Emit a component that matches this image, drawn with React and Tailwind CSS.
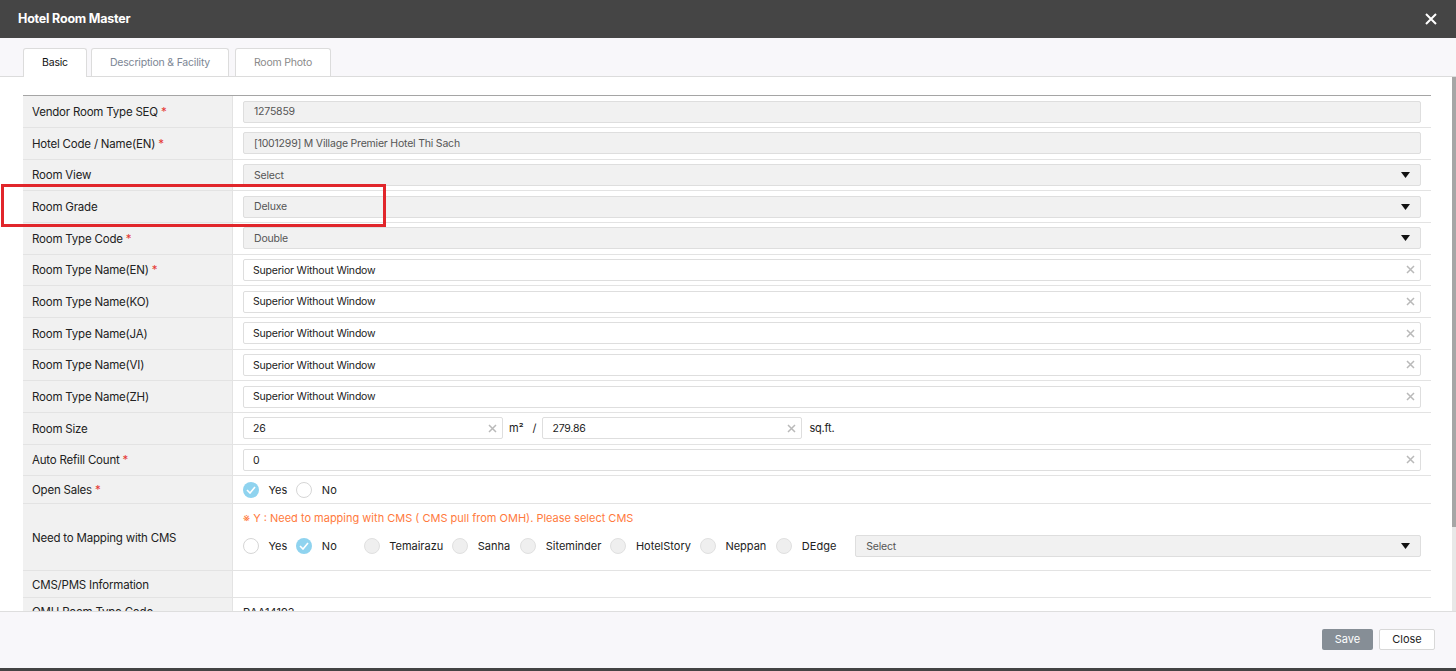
import React from "react";

const Star = () => <span className="text-[#e53935] ml-[3px]">*</span>;

const Arrow = () => (
  <svg width="9" height="6" viewBox="0 0 9 6" className="shrink-0">
    <path d="M0 0 H9 L4.5 6 Z" fill="#111" />
  </svg>
);

const Clear = () => (
  <svg width="9" height="9" viewBox="0 0 9 9" className="shrink-0">
    <path d="M1 1 L8 8 M8 1 L1 8" stroke="#b9b9b9" strokeWidth="1.5" />
  </svg>
);

function Row({ label, req, children, h = "h-[31.67px]", inner = "items-center" }) {
  return (
    <div className={`flex ${h} border-b border-[#e3e3e3]`}>
      <div className="w-[210px] shrink-0 bg-[#f1f1f1] border-r border-[#e3e3e3] flex items-center pl-[9px] pt-[2px] text-[11.5px] tracking-[-0.2px] text-[#222]">
        {label}
        {req && <Star />}
      </div>
      <div className={`flex-1 flex ${inner} px-[10px] min-w-0`}>{children}</div>
    </div>
  );
}

function Disabled({ text, select }) {
  return (
    <div className="flex-1 h-[22px] bg-[#f1f1f1] border border-[#dedede] rounded-[2px] flex items-center pl-[10px] pr-[10px] text-[10.5px] tracking-[-0.2px] text-[#555]">
      <span className="flex-1 pt-[1px]">{text}</span>
      {select && <Arrow />}
    </div>
  );
}

function Input({ text, className = "flex-1" }) {
  return (
    <div className={`${className} h-[22px] bg-white border border-[#dedede] rounded-[2px] flex items-center pl-[9px] pr-[5px] text-[10.5px] tracking-[-0.2px] text-[#222]`}>
      <span className="flex-1 pt-[1px]">{text}</span>
      <Clear />
    </div>
  );
}

function Radio({ state, label, gapAfter = "mr-[9px]" }) {
  let circle;
  if (state === "on") {
    circle = (
      <span className="w-[16px] h-[16px] rounded-full bg-[#8fd3ef] flex items-center justify-center shrink-0">
        <svg width="10" height="8" viewBox="0 0 10 8">
          <path d="M1 4 L4 7 L9 1" stroke="#fff" strokeWidth="1.6" fill="none" />
        </svg>
      </span>
    );
  } else if (state === "dis") {
    circle = <span className="w-[16px] h-[16px] rounded-full bg-[#efefef] border border-[#e0e0e0] shrink-0" />;
  } else {
    circle = <span className="w-[16px] h-[16px] rounded-full bg-white border border-[#d6d6d6] shrink-0" />;
  }
  return (
    <span className={`flex items-center ${gapAfter}`}>
      {circle}
      <span className="ml-[9.5px] pt-[1px] text-[11px] text-[#222]">{label}</span>
    </span>
  );
}

export default function App() {
  return (
    <div
      className="w-[1456px] h-[671px] flex flex-col overflow-hidden relative bg-[#3c3c3c]"
      style={{ fontFamily: "Inter, 'Noto Sans', sans-serif" }}
    >
      {/* Header */}
      <div className="h-[38px] shrink-0 bg-[#454545] flex items-center justify-between pl-[18px] pr-[19px]">
        <span className="text-white font-bold text-[12.5px] tracking-[-0.2px]">Hotel Room Master</span>
        <svg width="12" height="12" viewBox="0 0 12 12">
          <path d="M1 1 L11 11 M11 1 L1 11" stroke="#fff" strokeWidth="2" />
        </svg>
      </div>

      {/* Tabs */}
      <div className="h-[39px] shrink-0 bg-[#f8f7fa] border-b border-[#dcdcdc] flex items-end pl-[23px]">
        <div className="w-[64px] h-[29px] -mb-px bg-white border border-b-0 border-[#dcdcdc] rounded-t-[3px] flex items-center justify-center text-[10.5px] tracking-[-0.2px] text-[#111]">
          Basic
        </div>
        <div className="ml-[4px] w-[138px] h-[28px] bg-white border border-b-0 border-[#dcdcdc] rounded-t-[3px] flex items-center justify-center text-[10.5px] tracking-[-0.2px] text-[#7c8694]">
          Description &amp; Facility
        </div>
        <div className="ml-[6px] w-[96px] h-[28px] bg-white border border-b-0 border-[#dcdcdc] rounded-t-[3px] flex items-center justify-center text-[10.5px] tracking-[-0.2px] text-[#8a8a8a]">
          Room Photo
        </div>
      </div>

      {/* Body */}
      <div className="flex-1 bg-white flex overflow-hidden min-h-0">
        <div className="flex-1 pt-[18px] pl-[23px] pr-[21px] overflow-hidden">
          <div className="w-[1408px] border-t border-[#a5a5a5]">
            <Row label="Vendor Room Type SEQ" req h="h-[32px]">
              <Disabled text="1275859" />
            </Row>
            <Row label="Hotel Code / Name(EN)" req>
              <Disabled text="[1001299] M Village Premier Hotel Thi Sach" />
            </Row>
            <Row label="Room View">
              <Disabled text="Select" select />
            </Row>
            <Row label="Room Grade">
              <Disabled text="Deluxe" select />
            </Row>
            <Row label="Room Type Code" req>
              <Disabled text="Double" select />
            </Row>
            <Row label="Room Type Name(EN)" req>
              <Input text="Superior Without Window" />
            </Row>
            <Row label="Room Type Name(KO)">
              <Input text="Superior Without Window" />
            </Row>
            <Row label="Room Type Name(JA)">
              <Input text="Superior Without Window" />
            </Row>
            <Row label="Room Type Name(VI)">
              <Input text="Superior Without Window" />
            </Row>
            <Row label="Room Type Name(ZH)">
              <Input text="Superior Without Window" />
            </Row>
            <Row label="Room Size">
              <Input text="26" className="w-[260px]" />
              <span className="ml-[6px] text-[11px] text-[#222]">m²</span>
              <span className="ml-[9px] text-[11px] text-[#222]">/</span>
              <Input text="279.86" className="ml-[6px] w-[260px]" />
              <span className="ml-[7px] text-[11px] tracking-[-0.2px] text-[#222]">sq.ft.</span>
            </Row>
            <Row label="Auto Refill Count" req>
              <Input text="0" />
            </Row>
            <Row label="Open Sales" req h="h-[28px]">
              <Radio state="on" label="Yes" />
              <Radio state="off" label="No" />
            </Row>
            <Row label="Need to Mapping with CMS" h="h-[67px]" inner="items-start pt-[6px]">
              <div className="flex-1 flex flex-col">
                <div className="text-[11px] text-[#ff7a3d] leading-[14px] pt-[1px]">
                  ※ Y : Need to mapping with CMS ( CMS pull from OMH). Please select CMS
                </div>
                <div className="flex items-center mt-[10px]">
                  <Radio state="off" label="Yes" />
                  <Radio state="on" label="No" gapAfter="mr-[27px]" />
                  <Radio state="dis" label="Temairazu" />
                  <Radio state="dis" label="Sanha" gapAfter="mr-[10px]" />
                  <Radio state="dis" label="Siteminder" />
                  <Radio state="dis" label="HotelStory" />
                  <Radio state="dis" label="Neppan" gapAfter="mr-[10px]" />
                  <Radio state="dis" label="DEdge" gapAfter="mr-[19px]" />
                  <Disabled text="Select" select />
                </div>
              </div>
            </Row>
            <Row label="CMS/PMS Information" h="h-[27px]">
              <span />
            </Row>
            <Row label="OMH Room Type Code" h="h-[27px]">
              <span className="text-[11px] pt-[2px] text-[#222]">RAA14192</span>
            </Row>
          </div>
        </div>
        <div className="w-[4px] shrink-0 flex flex-col">
          <div className="h-[450px] bg-[#a6a6a6]" />
          <div className="flex-1 bg-[#e8e8e8]" />
        </div>
      </div>

      {/* Footer */}
      <div className="h-[57px] shrink-0 bg-[#f8f7fa] border-t border-[#dedede] flex items-center justify-end pr-[21px] pb-[2px]">
        <button className="w-[51px] h-[21px] rounded-[2px] bg-[#868e96] text-white text-[11px]">Save</button>
        <button className="ml-[6px] w-[56px] h-[21px] rounded-[2px] bg-white border border-[#d8d8d8] text-[#222] text-[11px]">
          Close
        </button>
      </div>
      <div className="h-[3px] shrink-0 bg-[#444]" />

      {/* Red highlight */}
      <div className="absolute left-[1px] top-[184px] w-[385px] h-[43px] border-[3px] border-[#e1262b]" />
    </div>
  );
}
